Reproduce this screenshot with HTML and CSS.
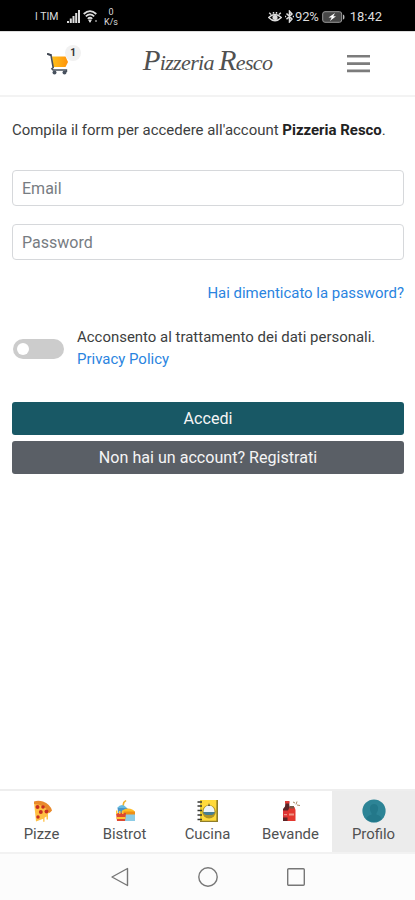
FILE: index.html
```html
<!DOCTYPE html>
<html lang="it">
<head>
<meta charset="utf-8">
<meta name="viewport" content="width=device-width, initial-scale=1">
<title>Pizzeria Resco</title>
<link rel="stylesheet" href="styles.css">
</head>
<body>
<div class="status">
  <div class="status-left">
    <span class="carrier"><small>I</small> TIM</span>
    <svg class="signal" width="13" height="13" viewBox="0 0 13 13" fill="#ddd"><path d="M0 11h2v2H0zM2.800 8.500h2V13h-2zM5.500 6h2v7h-2zM8.200 3h2v10h-2zM11 0h2v13h-2z"/></svg>
    <svg class="wifi" width="15" height="13" viewBox="0 0 15 13" fill="none" stroke="#ddd" stroke-width="1.700"><path d="M.7 4Q7 -1.800 13.300 4M2.800 6.400Q7 2.500 11.200 6.400M4.800 8.800Q7 6.700 9.200 8.800"/><path d="M5.800 10h2.400L7 12.300zM13 10v2" fill="#ddd" stroke-width="1"/></svg>
    <span class="rate"><span>0</span><span>K/s</span></span>
  </div>
  <div class="status-right">
    <svg width="14" height="12" viewBox="0 0 14 12" fill="none" stroke="#ddd" stroke-width="1.400"><path d="M.7 6.500Q7 .5 13.300 6.500Q7 13 .7 6.500zM3 3.500 1.200 1.800M5.500 2.800V1M8.500 2.800V1M11 3.500l1.800-1.700"/><circle cx="7" cy="6.500" r="1.900" fill="#ddd"/></svg>
    <svg class="bt" width="9" height="13" viewBox="0 0 9 13" fill="none" stroke="#ddd" stroke-width="1.500"><path d="M1.500 3.500 7 9 4.500 11.800V1.200L7 4 1.500 9.300M0 6.400h1.200M7.800 6.400H9"/></svg>
    <span class="percent">92%</span>
    <svg class="battery" width="23" height="12" viewBox="0 0 23 12"><rect x=".7" y=".7" width="19" height="10.600" rx="2.300" fill="#464646" stroke="#999"/><path d="M21 3.500q1.500 0 1.500 2.500T21 8.500z" fill="#bbb"/><path d="M13 2 6.500 6.500h3.200L8 10l6-4.700h-2.700z" fill="#fff"/></svg>
    <span class="clock">18:42</span>
  </div>
</div>
<header class="header">
  <a class="cart" href="#" aria-label="Carrello">
    <svg width="22" height="22" viewBox="0 0 22 22"><defs><linearGradient id="g"><stop stop-color="#ffc019"/><stop offset=".55" stop-color="#ffa812"/><stop offset="1" stop-color="#ff920b"/></linearGradient></defs><path d="M5 3.500H18.500L21 9l-2.500 5H6.200z" fill="url(#g)"/><path d="M.8 1.300 4 2l2.200 12.500-1.300 1.200 1.200 1.300h13.300v2" fill="none" stroke="#48505b" stroke-width="1.600"/><path d="M0 .8 4.200 2.100" stroke="#3e4550" stroke-width="2"/><g fill="#47515e"><circle cx="7.500" cy="19.500" r="2"/><circle cx="17.500" cy="19.500" r="2"/></g></svg>
    <span class="badge">1</span>
  </a>
  <div class="logo"><span>P</span>izzeria <span>R</span>esco</div>
  <button class="menu" aria-label="Menu"><svg width="23" height="19" viewBox="0 0 23 19" fill="none" stroke="#7c7c7c" stroke-width="2.600"><path d="M0 2.300h23M0 9.600h23M0 16.900h23"/></svg></button>
</header>
<main class="main">
  <p class="intro">Compila il form per accedere all'account <b>Pizzeria Resco</b>.</p>
  <input class="field" type="email" placeholder="Email">
  <input class="field" type="password" placeholder="Password">
  <a class="forgot" href="#">Hai dimenticato la password?</a>
  <div class="consent">
    <span class="switch"></span>
    <p>Acconsento al trattamento dei dati personali.<br><a href="#">Privacy Policy</a></p>
  </div>
  <button class="btn primary">Accedi</button>
  <button class="btn secondary">Non hai un account? Registrati</button>
</main>
<nav class="tabs">
  <a class="tab"><svg width="24" height="24" viewBox="0 0 24 24"><path d="M4 3.500Q16 2 21.500 11.500L18 14.800v5.700l-1.500 0v-3l-2 1.200v4h-1.300v-3L6 22.500z" fill="#ffc044"/><path d="M4 2.500Q8 .8 13 2.500q7 2.500 9 9L19.600 14Q15 5.500 4 5z" fill="#e98a2c"/><g fill="#c82e20"><circle cx="7.500" cy="8" r="2"/><circle cx="13" cy="8" r="1.800"/><circle cx="16.500" cy="12.500" r="2"/><circle cx="10.800" cy="13" r="2"/><circle cx="8" cy="18" r="1.700"/></g></svg><span>Pizze</span></a>
  <a class="tab"><svg width="24" height="24" viewBox="0 0 24 24"><path d="m10 7 .8-3.500 2.200-2" fill="none" stroke="#efb22e" stroke-width="1.600"/><path d="M4 9q5-6 10 0z" fill="#68bce0"/><path d="M4.500 9h10l-1 6h-8z" fill="#4994c8"/><path d="M12 14h10v8H12z" fill="#8ccce6"/><path d="M9 13q1-3.500 6-3.500t7 3.500z" fill="#ffbd28"/><path d="M8.500 12.500H22v3H8.500z" fill="#ef8f16"/><path d="M3 14h10l-1 8H4z" fill="#dd4931"/><path d="M3 11.500h1.500V15H3zm3 .5h1.500v3H6zm3-.5h1.500V15H9zM3.500 18h9v2h-9z" fill="#ffc638"/></svg><span>Bistrot</span></a>
  <a class="tab"><svg width="24" height="24" viewBox="0 0 24 24"><path d="M4 1h18v22H4z" fill="#e3c72b"/><path d="M6 1h14v21H6z" fill="#ffda3b"/><path d="M20.500 1H22v22H4v-1.300h16.500z" fill="#8f7d2b"/><circle cx="13" cy="12.800" r="6.800" fill="#ad9326"/><path d="M7.500 13q0-6 5.500-6.500 5.500.5 5.500 6.500z" fill="#eef5f8"/><path d="M7 13h12q-1 3-3 3H10q-2 0-3-3z" fill="#477e93"/><path d="m12 7 1-3 1 3z" fill="#55523d"/><path d="M1.500 3H6M1.500 7H6M1.500 11.500H6M1.500 16H6M1.500 20.500H6" stroke="#373936" stroke-width="1.700"/></svg><span>Cucina</span></a>
  <a class="tab"><svg width="24" height="24" viewBox="0 0 24 24"><path d="M6.500 2.500H10l.5 5L12 10v12H4V10l2-2.500z" fill="#5b2527"/><path d="M6 2h4.500v2.500H6z" fill="#df3b36"/><path d="M4 11.500h8.500v7H4z" fill="#dc3437"/><path d="M10.500 8h5l1 3v11h-8V13z" fill="#e3372f"/><path d="M10.500 7h4.500v2.500h-4.500z" fill="#795948"/><path d="M10 14.500h5v2h-5zM5 15h3v1.200H5z" fill="#ef9586"/><path d="m14 3 2 1m2 2 3 .5m-3-4-1 3" stroke="#a98767" stroke-width="1"/></svg><span>Bevande</span></a>
  <a class="tab active"><svg width="24" height="24" viewBox="0 0 24 24"><circle cx="12" cy="12" r="11.600" fill="#2d8496"/><path d="M4.300 20Q5 16.500 9.500 15.700V14Q7.500 12 8 8.500T12 5t4 3.500q.5 3.500-1.500 5.500v1.700Q19 16.500 19.700 20 12 26.500 4.300 20z" fill="#23788a"/></svg><span>Profilo</span></a>
</nav>
<div class="sysnav">
  <svg width="20" height="20" viewBox="0 0 20 20"><path d="M17.500 1.500v17L2 10z"/></svg>
  <svg width="20" height="20" viewBox="0 0 20 20"><circle cx="10" cy="10" r="9.200"/></svg>
  <svg width="20" height="20" viewBox="0 0 20 20"><rect x="1.700" y="1.700" width="16.600" height="16.600" rx="1"/></svg>
</div>
</body>
</html>
```
FILE: styles.css
```css
* { box-sizing: border-box; }
body { margin: 0; height: 900px; display: flex; flex-direction: column; overflow: hidden; background: #fff; color: #3c3e40; font: 14.96px/22px Roboto, sans-serif; }
a { color: #2a84e0; text-decoration: none; }
p { margin: 0; }
b { color: #222; }
button { font: inherit; padding: 0; border: 0; cursor: pointer; }
.status { height: 31px; flex: none; background: #000; color: #ddd; display: flex; justify-content: space-between; padding: 2px 33px 0 35px; font-size: 12.5px; }
.status-left, .status-right { display: flex; align-items: center; }
.carrier { font-size: 10.5px; width: 32px; white-space: nowrap; }
.carrier small { font-size: 10px; }
.wifi { margin-left: 3px; }
.rate { display: flex; flex-direction: column; align-items: center; font-size: 9px; line-height: 10px; margin-left: 6px; }
.bt { margin: 0 1px 0 3px; }
.percent { font-size: 13px; letter-spacing: -.2px; }
.battery { margin: 0 5px 0 3px; }
.clock { font-size: 13px; }
.header { height: 66px; flex: none; border-top: 1px solid #ddd; border-bottom: 2px solid #f3f3f3; display: grid; grid-template-columns: 115px 1fr 115px; align-items: center; }
.cart { position: relative; justify-self: start; display: flex; margin: 1px 0 0 47px; }
.badge { position: absolute; left: 18px; top: -8px; width: 16px; height: 16px; border-radius: 8px; background: #f1f1f1; color: #333; font-size: 10px; font-weight: 700; line-height: 16px; text-align: center; }
.logo { text-align: center; font: italic 22px/30px "Liberation Serif", serif; color: #505050; white-space: nowrap; letter-spacing: -.65px; margin-top: -5px; }
.logo span { font-size: 29px; }
.menu { justify-self: end; width: 23px; margin-right: 45px; background: none; display: flex; }
.main { flex: 1; padding: 22px 11px 0 12px; display: flex; flex-direction: column; }
.intro { white-space: nowrap; margin-bottom: 29px; }
.field { display: block; width: 100%; height: 36px; margin: 0 0 18px; padding: 0 9px; border: 1px solid #d6d8db; border-radius: 4px; background: #fff; font: 16px Roboto, sans-serif; }
.field::placeholder { color: #777c82; opacity: 1; }
.forgot { align-self: flex-end; margin-top: 4px; }
.consent { display: flex; align-items: center; gap: 13px; margin: 23px 0 31px; padding-left: 1px; white-space: nowrap; }
.consent p { margin: -1px 0 1px; }
.switch { width: 51px; height: 20px; border-radius: 10px; background: #ccc; padding: 4px; flex: none; }
.switch::before { content: ""; display: block; width: 12px; height: 12px; border-radius: 50%; background: #fff; }
.btn { height: 33px; width: 100%; border-radius: 3px; color: #f5f5f5; font-size: 16.1px; margin-bottom: 6px; flex: none; }
.primary { background: #185865; }
.secondary { background: #5a5f66; }
.tabs { height: 65px; flex: none; border-top: 2px solid #eee; border-bottom: 2px solid #f2f2f2; display: grid; grid-template-columns: repeat(5, 1fr); }
.tab { color: #505152; display: flex; flex-direction: column; align-items: center; padding-top: 8px; font-size: 14.9px; }
.tab span { line-height: 22px; }
.active { background: #ececec; }
.sysnav { height: 46px; flex: none; background: #fcfcfc; display: flex; justify-content: center; align-items: center; gap: 68px; }
.sysnav svg { fill: none; stroke: #777; stroke-width: 1.4; stroke-linejoin: round; }
```
